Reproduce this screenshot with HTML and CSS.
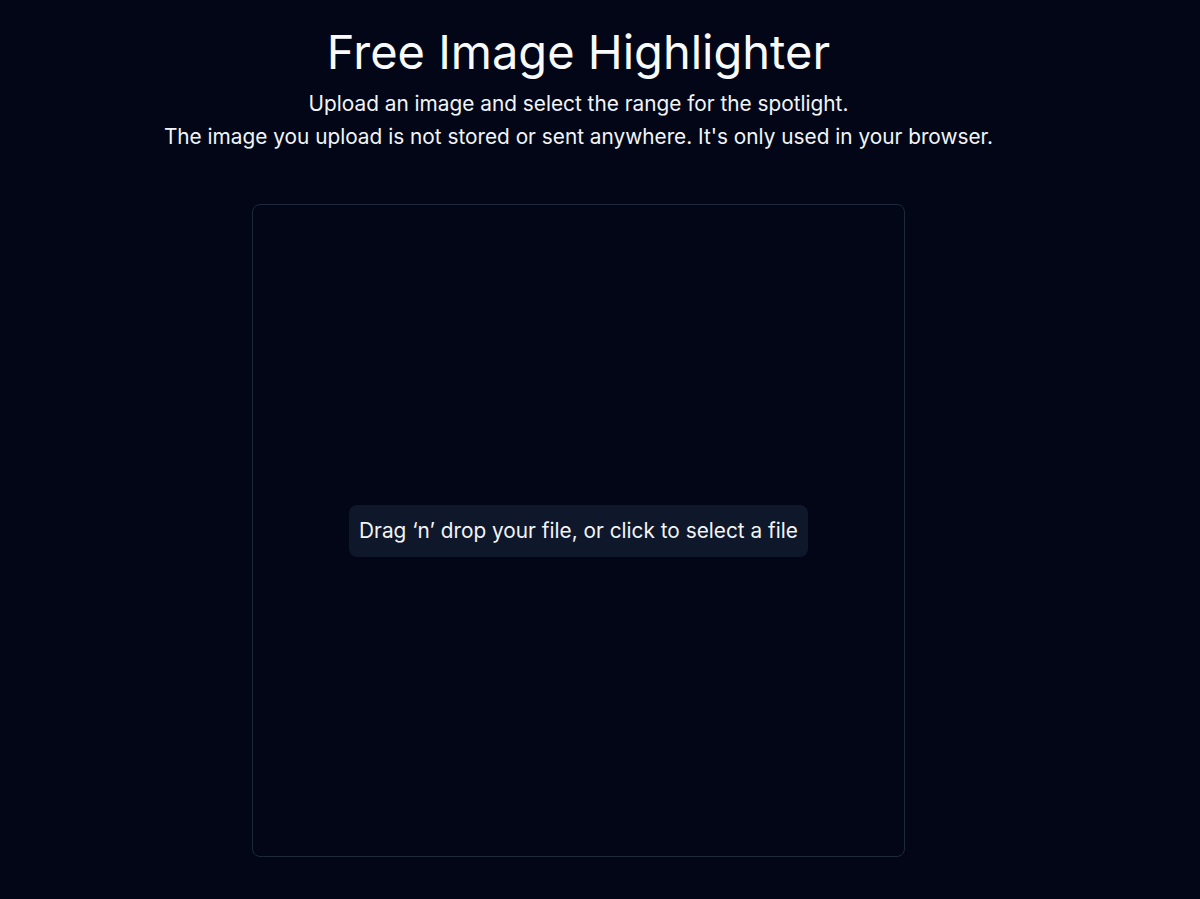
FILE: index.html
```html
<!DOCTYPE html>
<html lang="en">
<head>
<meta charset="utf-8">
<title>Free Image Highlighter</title>
<link rel="stylesheet" href="styles.css">
</head>
<body>
<main class="page">
  <header class="intro">
    <h1 class="title">Free Image Highlighter</h1>
    <p class="lead">Upload an image and select the range for the spotlight.</p>
    <p class="lead">The image you upload is not stored or sent anywhere. It's only used in your browser.</p>
  </header>
  <section class="dropzone">
    <div class="drop-label">Drag ‘n’ drop your file, or click to select a file</div>
  </section>
</main>
</body>
</html>
```

FILE: styles.css
```css
html, body {
  margin: 0;
  padding: 0;
  background: #020617;
  color: #f8fafc;
  font-family: Inter, "Noto Sans", sans-serif;
  height: 100%;
  overflow: hidden;
}

.page {
  width: 1157px;
  display: flex;
  flex-direction: column;
  align-items: center;
  padding-top: 28px;
}

.intro {
  display: flex;
  flex-direction: column;
  align-items: center;
}

.title {
  margin: 0 0 11px;
  font-size: 47px;
  line-height: 48px;
  font-weight: 400;
  color: #f8fafc;
}

.lead {
  margin: 0;
  font-size: 20.8px;
  line-height: 33px;
  color: #f1f5f9;
}

.dropzone {
  margin-top: 51px;
  width: 651px;
  height: 651px;
  border: 1px solid #1e293b;
  border-radius: 8px;
  background: #020617;
  display: flex;
  align-items: center;
  justify-content: center;
}

.drop-label {
  background: #0f172a;
  border-radius: 8px;
  padding: 12px 10px;
  font-size: 20.8px;
  line-height: 28px;
  color: #f1f5f9;
}
```
